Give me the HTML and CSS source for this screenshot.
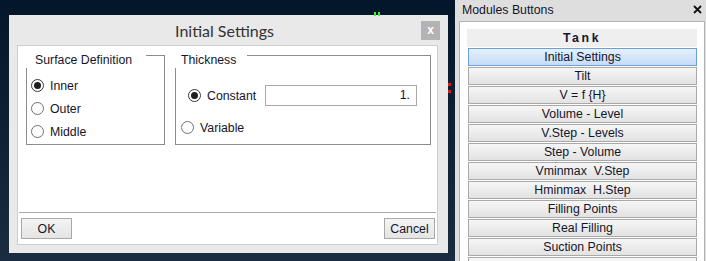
FILE: index.html
```html
<!DOCTYPE html>
<html lang="en">
<head>
  <meta charset="UTF-8" />
  <title>Initial Settings</title>
  <link rel="stylesheet" href="styles.css">
</head>
<body>

  <div class="desk">
    <span class="mark mark-green"></span>
    <span class="mark mark-red"></span>

    <div class="dialog">
      <div class="dialog-title">
        <span class="dialog-caption">Initial Settings</span>
        <button class="btn-close">x</button>
      </div>

      <div class="dialog-body">
        <div class="groups">
          <div class="group group-surface">
            <span class="group-title">Surface Definition</span>
            <label class="radio"><span class="radio-dot checked"></span>Inner</label>
            <label class="radio"><span class="radio-dot"></span>Outer</label>
            <label class="radio"><span class="radio-dot"></span>Middle</label>
          </div>

          <div class="group group-thickness">
            <span class="group-title">Thickness</span>
            <div class="radio radio-constant">
              <span class="radio-dot checked"></span>
              <span class="radio-label">Constant</span>
              <span class="field">1.</span>
            </div>
            <label class="radio radio-variable"><span class="radio-dot"></span>Variable</label>
          </div>
        </div>

        <div class="separator"></div>

        <div class="actions">
          <button class="btn">OK</button>
          <button class="btn">Cancel</button>
        </div>
      </div>
    </div>
  </div>

  <div class="dock">
    <div class="dock-header">
      <span>Modules Buttons</span>
      <svg class="dock-close" width="9" height="9" viewBox="0 0 9 9">
        <path d="M1 1 L8 8 M8 1 L1 8" stroke="#111" stroke-width="1.8" />
      </svg>
    </div>
    <div class="dock-panel">
      <div class="module-title">Tank</div>
      <button class="module-btn active">Initial Settings</button>
      <button class="module-btn">Tilt</button>
      <button class="module-btn">V = f {H}</button>
      <button class="module-btn">Volume - Level</button>
      <button class="module-btn">V.Step - Levels</button>
      <button class="module-btn">Step - Volume</button>
      <button class="module-btn">Vminmax &nbsp;V.Step</button>
      <button class="module-btn">Hminmax &nbsp;H.Step</button>
      <button class="module-btn">Filling Points</button>
      <button class="module-btn">Real Filling</button>
      <button class="module-btn">Suction Points</button>
      <button class="module-btn"></button>
    </div>
  </div>

</body>
</html>
```

FILE: styles.css
```css
  /* Reset */
  * {
    margin: 0;
    padding: 0;
    box-sizing: border-box;
  }

  body {
    width: 706px;
    height: 261px;
    display: flex;
    overflow: hidden;
    font-family: 'Liberation Sans', Arial, sans-serif;
    font-size: 12.3px;
    color: #15152a;
  }

  button {
    font-family: inherit;
    font-size: inherit;
    color: inherit;
  }

  /* Dark canvas behind the dialog */
  .desk {
    position: relative;
    width: 455px;
    height: 261px;
    background: linear-gradient(#03162a, #1a2c3f);
    padding: 15px 0 0 9px;
  }

  .mark {
    position: absolute;
    z-index: 2;
  }

  .mark-green {
    left: 374px;
    top: 12px;
    width: 6px;
    height: 4px;
    border-left: 2px solid #3cf23c;
    border-right: 2px solid #3cf23c;
  }

  .mark-red {
    left: 448px;
    top: 83px;
    width: 3px;
    height: 10px;
    border-left: 3px dotted #e01818;
  }

  /* Dialog */
  .dialog {
    width: 439px;
    height: 238px;
    background: #e9e9e9;
    display: flex;
    flex-direction: column;
  }

  .dialog-title {
    height: 30px;
    display: grid;
    grid-template-columns: 1fr auto 1fr;
    align-items: center;
    padding-right: 8px;
  }

  .dialog-caption {
    grid-column: 2;
    font-family: Lato, 'Open Sans', sans-serif;
    font-size: 16px;
    color: #333;
    padding-top: 1px;
  }

  .btn-close {
    grid-column: 3;
    justify-self: end;
    width: 19px;
    height: 19px;
    border: none;
    background: #b3b3b3;
    color: #fff;
    font-weight: bold;
    font-size: 12px;
    line-height: 17px;
  }

  .dialog-body {
    flex: 1;
    margin: 0 10px 8px 8px;
    background: #fff;
    border: 1px solid #cdcdcd;
    display: flex;
    flex-direction: column;
  }

  .groups {
    flex: 1;
    display: flex;
    gap: 10px;
    padding: 9px 6px 0 8px;
  }

  .group {
    position: relative;
    height: 90px;
    border: 1px solid #8c8c8c;
  }

  .group-surface {
    width: 139px;
    padding: 18px 0 0 4px;
  }

  .group-thickness {
    width: 256px;
    padding-top: 29px;
  }

  .group-title {
    position: absolute;
    top: -4px;
    left: -1px;
    height: 16px;
    line-height: 16px;
    background: #fff;
    font-size: 12.3px;
    padding: 0 14px 0 9px;
  }

  .group-thickness .group-title {
    padding: 0 11px 0 6px;
  }

  /* Radio buttons */
  .radio {
    display: flex;
    align-items: center;
    gap: 6px;
    height: 23px;
  }

  .radio-dot {
    width: 13px;
    height: 13px;
    border: 1px solid #707070;
    border-radius: 50%;
    background: #fff;
    display: flex;
    align-items: center;
    justify-content: center;
  }

  .radio-dot.checked {
    border-color: #3a3a3a;
  }

  .radio-dot.checked::after {
    content: '';
    width: 7px;
    height: 7px;
    border-radius: 50%;
    background: #1e1e1e;
  }

  .radio-constant {
    height: 21px;
    padding-left: 12px;
  }

  .radio-label {
    width: 52px;
  }

  .radio-variable {
    height: 21px;
    margin-top: 11px;
    padding-left: 5px;
  }

  .field {
    width: 152px;
    height: 21px;
    border: 1px solid #a9a9a9;
    text-align: right;
    padding-right: 6px;
    line-height: 19px;
  }

  .separator {
    height: 1px;
    margin: 0 1px;
    background: #a8a8a8;
  }

  .actions {
    display: flex;
    justify-content: space-between;
    padding: 5px 2px 5px 3px;
  }

  .btn {
    width: 51px;
    height: 21px;
    border: 1px solid #a9a9a9;
    background: linear-gradient(#f4f4f4, #e4e4e4);
  }

  /* Side dock */
  .dock {
    width: 251px;
    height: 261px;
    background: #dedede;
    padding: 0 1px 0 4px;
    display: flex;
    flex-direction: column;
  }

  .dock-header {
    height: 19px;
    margin-bottom: 2px;
    display: flex;
    align-items: center;
    justify-content: space-between;
    padding: 0 3px 0 3px;
  }

  .dock-panel {
    flex: 1;
    background: #fff;
    border: 1px solid #b2b2b2;
    border-bottom: none;
    padding: 7px 7px 0 8px;
    display: flex;
    flex-direction: column;
    gap: 1px;
    overflow: hidden;
  }

  .module-title {
    flex: none;
    height: 18px;
    margin-left: -1px;
    background: #efefef;
    text-align: center;
    font-weight: bold;
    letter-spacing: 2.6px;
    line-height: 18px;
  }

  .module-btn {
    flex: none;
    height: 18px;
    border: 1px solid #a9a9a9;
    background: linear-gradient(#f6f6f6, #e2e2e2);
    line-height: 16px;
  }

  .module-btn.active {
    border-color: #6d9fd9;
    background: linear-gradient(#e5f0fc, #c5dcf8);
  }
```
